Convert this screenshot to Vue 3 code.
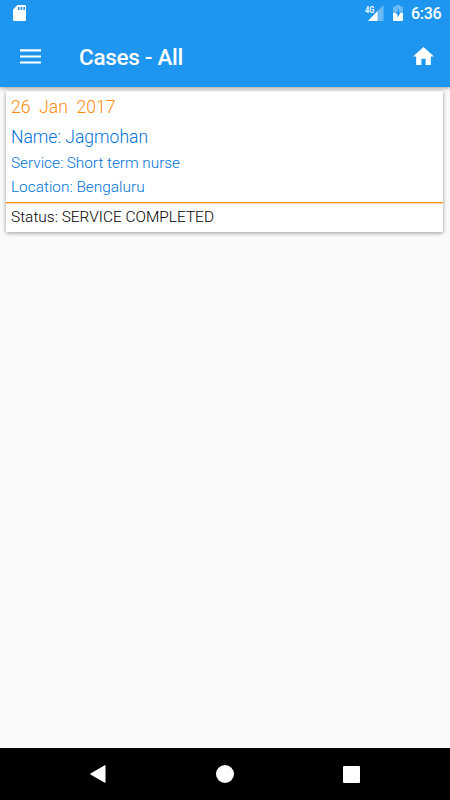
<script setup>
const service = {
  date: '26\u00a0\u00a0Jan\u00a0\u00a02017',
  name: 'Jagmohan',
  type: 'Short term nurse',
  location: 'Bengaluru',
  status: 'SERVICE COMPLETED'
}
</script>

<template>
  <div class="screen">
    <header class="header">
      <div class="status-bar">
        <svg class="sd" viewBox="0 0 13 16" width="13" height="16">
          <path fill="#fff" fill-rule="evenodd" d="M4.500 0H12a1 1 0 0 1 1 1v14a1 1 0 0 1-1 1H1a1 1 0 0 1-1-1V4.500zM5 2v3h1.600V2zM7.700 2v3h1.600V2zM10.400 2v3H12V2z" />
        </svg>
        <span class="network">4G</span>
        <svg class="signal" viewBox="0 0 16 16" width="16" height="16">
          <path fill="#fff" fill-opacity=".35" d="M15.500 0v16H0z" />
          <path fill="#fff" d="M9.500 6v10H0z" />
        </svg>
        <svg class="battery" viewBox="0 0 10 16" width="10" height="16">
          <path fill="#fff" fill-opacity=".35" d="M3 0h4v1.500h2a1 1 0 0 1 1 1V8H0V2.500a1 1 0 0 1 1-1h2z" />
          <path fill="#fff" d="M0 8h10v7a1 1 0 0 1-1 1H1a1 1 0 0 1-1-1z" />
          <path fill="#1e96f0" d="M6 3.500v4.200H7.500L4.500 12.500V9.300H2.800z" />
        </svg>
        <span class="clock">6:36</span>
      </div>
      <div class="toolbar">
        <svg class="menu" viewBox="0 0 21 15" width="21" height="15">
          <path fill="#fff" d="M0 .2h21v2.200H0zM0 6.400h21v2.200H0zM0 12.400h21v2.200H0z" />
        </svg>
        <h1 class="title">Cases - All</h1>
        <svg class="home" viewBox="2 3 20 17" width="21" height="18" preserveAspectRatio="none">
          <path fill="#fff" d="M10 20v-6h4v6h5v-8h3L12 3 2 12h3v8z" />
        </svg>
      </div>
    </header>
    <main class="content">
      <article class="card">
        <div class="details">
          <p class="date">{{ service.date }}</p>
          <p class="name">Name: {{ service.name }}</p>
          <p class="type">Service: {{ service.type }}</p>
          <p class="location">Location: {{ service.location }}</p>
        </div>
        <p class="state">Status: {{ service.status }}</p>
      </article>
    </main>
    <nav class="navigation">
      <svg viewBox="0 0 16 18" width="16" height="18">
        <path fill="#fff" d="M14.800.2Q15.500 0 15.500.800v16.400q0 .800-.700.600L.500 9.500Q0 9 .5 8.500z" />
      </svg>
      <svg viewBox="0 0 18 18" width="18" height="18"><circle cx="9" cy="9" r="9" fill="#fff" /></svg>
      <svg viewBox="0 0 17 17" width="17" height="17"><rect width="17" height="17" rx="1" fill="#fff" /></svg>
    </nav>
  </div>
</template>

<style>
body {
  margin: 0;
}
</style>

<style scoped>
.screen {
  display: flex;
  flex-direction: column;
  width: 450px;
  height: 800px;
  overflow: hidden;
  background: #fafafa;
  font-family: Roboto, sans-serif;
}
.header {
  z-index: 1;
  height: 87px;
  flex: none;
  background: #1e96f0;
  color: #fff;
  box-shadow: 0 1px 4px rgba(0, 0, 0, 0.4);
}
.status-bar {
  display: flex;
  align-items: flex-start;
  height: 28px;
  box-sizing: border-box;
  padding: 5px 9px 0 13px;
}
.network {
  margin-left: auto;
  font-size: 9.5px;
  line-height: 9px;
  font-weight: 600;
  width: 11px;
  margin-right: -8px;
  transform: scaleX(0.78);
  transform-origin: left;
  white-space: nowrap;
}
.signal,
.battery,
.sd {
  flex: none;
}
.battery {
  margin-left: 9px;
}
.clock {
  margin-left: 8px;
  width: 30px;
  font-size: 16px;
  letter-spacing: -0.3px;
  line-height: 18px;
  font-weight: 500;
  white-space: nowrap;
}
.toolbar {
  display: flex;
  align-items: center;
  height: 59px;
  box-sizing: border-box;
  padding: 0 16px 2px 20px;
}
.title {
  margin: 0 0 0 38px;
  font-size: 22.5px;
  letter-spacing: -0.3px;
  line-height: 28px;
  font-weight: 500;
}
.home {
  margin-left: auto;
  margin-top: -2px;
}
.content {
  flex: 1;
  padding: 4px 7px 0 5.5px;
}
.card {
  height: 141px;
  background: #fff;
  border-radius: 1px;
  box-shadow: 0 1px 4px rgba(0, 0, 0, 0.4);
  font-weight: 300;
  overflow: hidden;
}
.details {
  height: 111px;
  border-bottom: 1px solid #ff8c0a;
  padding-left: 5.5px;
  color: #0073d8;
}
p {
  margin: 0;
  white-space: nowrap;
}
.date {
  padding-top: 4px;
  font-size: 17.6px;
  line-height: 24px;
  color: #ff8c0a;
}
.name {
  padding-top: 6px;
  font-size: 17.5px;
  line-height: 24px;
}
.type,
.location {
  font-size: 15.4px;
  line-height: 24px;
}
.type {
  padding-top: 2px;
  letter-spacing: -0.04px;
}
.state {
  border-top: 1px solid #ffdcb5;
  padding-left: 5.5px;
  font-size: 15.45px;
  line-height: 27px;
  color: #000;
}
.navigation {
  display: flex;
  align-items: center;
  justify-content: space-between;
  flex: none;
  height: 52px;
  box-sizing: border-box;
  padding: 0 90px;
  background: #000;
}
</style>
